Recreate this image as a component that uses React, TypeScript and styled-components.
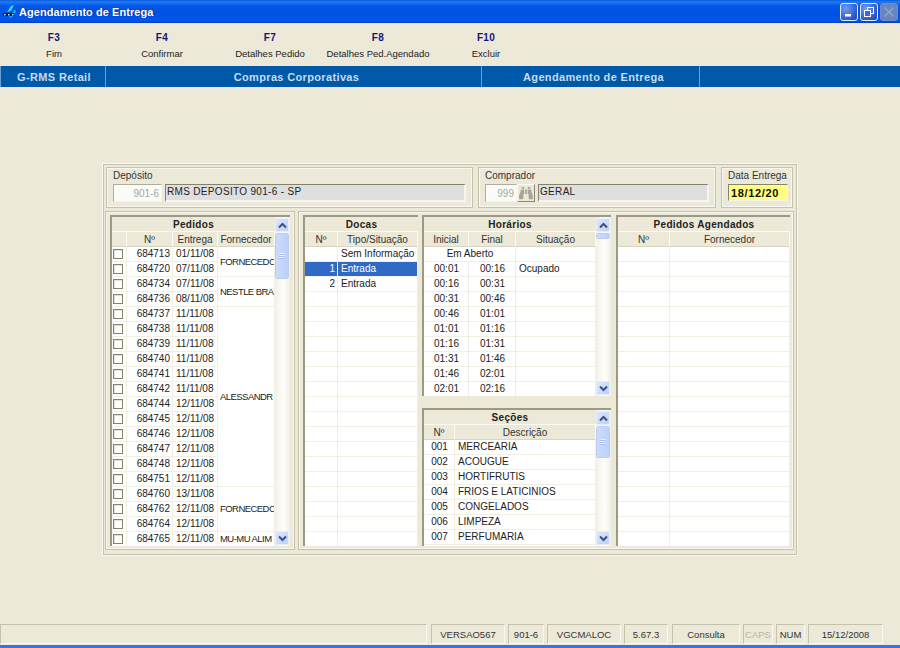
import React from "react";
import styled, { createGlobalStyle } from "styled-components";
import { FaBinoculars } from "react-icons/fa";

const Global = createGlobalStyle`
  html, body { margin: 0; padding: 0; background: #ece9d8; }
  body { font-family: "Liberation Sans", Arial, sans-serif; font-size: 10px; color: #222; }
  * { box-sizing: border-box; }
`;

const Page = styled.div`
  width: 900px; height: 648px; display: flex; flex-direction: column; overflow: hidden; background: #ece9d8;
`;
const TitleBar = styled.div`
  height: 24px; flex: none; display: flex; align-items: center; padding: 0 2px 1px 3px;
  background: linear-gradient(180deg, #0a5ad8 0%, #1f7cf4 8%, #0558ea 22%, #0050e4 55%, #0056ee 85%, #0040c0 96%, #e8e6da 96%);
`;
const TitleText = styled.div`
  color: #fff; font: bold 11px "Liberation Sans", sans-serif; letter-spacing: .05px; flex: 1; margin-left: 2px; text-shadow: 1px 0 1px #0a2a90;
`;
const WinButton = styled.div<{ $off?: boolean }>`
  width: 18px; height: 18px; margin-left: 2px; border-radius: 3px; display: flex; align-items: center; justify-content: center;
  border: 1px solid ${p => (p.$off ? "#6f8cc8" : "#e4ecfb")};
  background: ${p => (p.$off ? "#6a84c0" : "radial-gradient(circle at 30% 30%, #6e9cf2, #2450c8 80%)")};
`;
const Toolbar = styled.div`
  height: 42px; flex: none; display: flex; align-items: flex-start;
`;
const ToolItem = styled.div`
  width: 108px; display: flex; flex-direction: column; align-items: center; padding-top: 8px; gap: 4px; font-size: 9.5px; color: #222;
`;
const ToolKey = styled.b`
  color: #14147a; font-size: 10px; letter-spacing: .3px; line-height: 12px;
`;
const ToolLabel = styled.span` line-height: 11px; white-space: nowrap; `;
const Band = styled.div`
  height: 21px; flex: none; display: flex; background: #0058a8;
`;
const BandCell = styled.div<{ $w: number; $first?: boolean }>`
  width: ${p => p.$w}px; display: flex; align-items: center; justify-content: center; color: #c6dcee;
  font: bold 11px "Liberation Sans", sans-serif; letter-spacing: .35px; padding-left: ${p => (p.$first ? 2 : 6)}px;
  border-right: 1px solid #6c9ed0; border-left: ${p => (p.$first ? "1px solid #6c9ed0" : "0")};
`;
const Content = styled.div`
  flex: 1; padding: 76px 0 0 102px;
`;
const Outer = styled.div`
  width: 696px; height: 393px; padding: 3px; display: flex; flex-direction: column; gap: 3px;
  border: 1px solid #f8f7f0; outline: 1px solid #c4c1ac; outline-offset: -2px;
`;
const TopRow = styled.div` display: flex; gap: 5px; height: 41px; `;
const Group = styled.div<{ $w: number }>`
  width: ${p => p.$w}px; height: 41px; padding: 2px 6px 0 6px; border: 1px solid #c4c1ac; box-shadow: inset 0 0 0 1px #f8f7f0;
  display: flex; flex-direction: column; gap: 2px;
`;
const GroupLabel = styled.div` font-size: 10px; line-height: 12px; color: #333; white-space: nowrap; `;
const Fields = styled.div` display: flex; height: 18px; `;
const CodeInput = styled.div<{ $w: number }>`
  width: ${p => p.$w}px; height: 18px; background: #fbfbf8; color: #a8a8a0; text-align: right; padding: 0 2px; line-height: 17px;
  border: 1px solid; border-color: #b0ad9c #f4f3ea #f4f3ea #b0ad9c; flex: none;
`;
const DescField = styled.div<{ $w: number }>`
  width: ${p => p.$w}px; height: 18px; margin-left: 3px; background: #dfdfdf; padding: 0 1px; line-height: 14px; letter-spacing: .32px; color: #222;
  border: 1px solid; border-width: 1px 2px 2px 1px; border-color: #85826f #f6f5ee #f6f5ee #85826f;
`;
const LookBtn = styled.div`
  width: 18px; height: 18px; flex: none; background: #ece9d8; color: #a9a699; display: flex; align-items: center; justify-content: center;
  border: 1px solid; border-color: #fbfaf4 #8c8975 #8c8975 #fbfaf4;
`;
const DateInput = styled.div`
  width: 60px; height: 17px; background: #ffff80; padding-left: 2px; font: bold 11px/16px "Liberation Sans", sans-serif; letter-spacing: .65px; color: #111;
  border: 1px solid; border-color: #85826f #f4f3ea #f4f3ea #85826f;
`;
const BottomRow = styled.div` display: flex; gap: 3px; height: 339px; margin-left: -1px; `;
const GridGroup = styled.div<{ $w: number }>`
  width: ${p => p.$w}px; height: 339px; flex: none; display: flex; padding: 3px 3px 3px 4px; border: 1px solid #c4c1ac;
  box-shadow: inset 0 0 0 1px #f8f7f0;
`;
const Sunken = styled.div<{ $w: number; $h: number }>`
  width: ${p => p.$w}px; height: ${p => p.$h}px; flex: none; display: flex; overflow: hidden; background: #fff;
  border-top: 2px solid #9c9985; border-left: 2px solid #9c9985;
`;
const Stack = styled.div<{ $w: number }>` width: ${p => p.$w}px; margin-left: 4px; flex: none; display: flex; flex-direction: column; gap: 12px; `;
const TableHold = styled.div` flex: 1; min-width: 0; overflow: hidden; `;
const Table = styled.table`
  table-layout: fixed; width: 100%; border-collapse: separate; border-spacing: 0; font-size: 10px;
`;
const TitleCell = styled.th`
  height: 15px; padding: 0; background: #ece9d8; font: bold 10px "Liberation Sans", sans-serif; letter-spacing: .3px; color: #222; text-align: center;
  border-bottom: 1px solid #fbfaf4;
`;
const HeadCell = styled.th`
  height: 15px; padding: 0; background: #ece9d8; font: normal 10px "Liberation Sans", sans-serif; color: #333; text-align: center; overflow: hidden; white-space: nowrap;
  border-right: 1px solid #fbfaf4; border-bottom: 1px solid #d8d5c2;
`;
const Cell = styled.td<{ $align?: string; $sel?: boolean }>`
  height: 15px; padding: 0 2px 0 3px; line-height: 14px; text-align: ${p => p.$align || "left"}; overflow: visible; white-space: nowrap; color: ${p => (p.$sel ? "#fff" : "#222")};
  background: ${p => (p.$sel ? "#316ac5" : "#fff")}; border-right: 1px solid #f1efe2; border-bottom: 1px solid #f1efe2;
`;
const ClipCell = styled(Cell)` overflow: hidden; padding: 0 0 0 2px; font-size: 9.5px; letter-spacing: -.55px; `;
const Check = styled.span`
  display: block; width: 10px; height: 10px; margin: 0 0 0 -2px; border: 1px solid #85826f; background: #fff; box-shadow: inset 1px 1px 0 #e4e2d6;
`;
const Scroll = styled.div`
  width: 15px; flex: none; display: flex; flex-direction: column; padding: 1px 0; background: linear-gradient(90deg, #f3f1e8, #fefefb 60%, #f0efe4);
`;
const ScrollBtn = styled.div`
  height: 14px; flex: none; width: 14px; border-radius: 2px; border: 1px solid #e6eefc; background: linear-gradient(135deg, #dbe7fd, #bcd0f8);
  display: flex; align-items: center; justify-content: center;
`;
const Thumb = styled.div<{ $h: number }>`
  height: ${p => p.$h}px; width: 14px; margin-top: 1px; border-radius: 2px; flex: none; border: 1px solid #fdfdff; outline: 1px solid #bccdf2; outline-offset: -1px;
  background: linear-gradient(90deg, #cbdbfb, #bdd0f8); display: flex; align-items: center; justify-content: center;
`;
const Grip = styled.span`
  width: 6px; height: 6px; display: block; background: repeating-linear-gradient(180deg, #e8effd 0 1px, #a9c0ee 1px 2px);
`;
const Spacer = styled.div` flex: 1; `;
const StatusBar = styled.div`
  height: 21px; flex: none; display: flex; padding-bottom: 1px;
`;
const StatusCell = styled.div<{ $w: number; $gap: number; $off?: boolean }>`
  width: ${p => p.$w}px; margin-left: ${p => p.$gap}px; display: flex; align-items: center; justify-content: center; color: ${p => (p.$off ? "#b8b5a6" : "#333")}; font-size: 9.5px; white-space: nowrap;
  border: 1px solid; border-color: #c4c1ac #f8f7f0 #f8f7f0 #c4c1ac;
`;
const BottomEdge = styled.div`
  height: 3px; flex: none; background: #2f78e4;
`;

const Chevron = ({ down }: { down?: boolean }) => (
  <svg width="9" height="7" viewBox="0 0 9 7">
    <path d={down ? "M1 1.5 L4.5 5 L8 1.5" : "M1 5.5 L4.5 2 L8 5.5"} fill="none" stroke="#3d5178" strokeWidth="2" />
  </svg>
);

const ScrollBar = ({ thumb }: { thumb: number }) => (
  <Scroll>
    <ScrollBtn><Chevron /></ScrollBtn>
    <Thumb $h={thumb}>{thumb > 12 && <Grip />}</Thumb>
    <Spacer />
    <ScrollBtn><Chevron down /></ScrollBtn>
  </Scroll>
);

const Cols = ({ widths }: { widths: number[] }) => (
  <colgroup>{widths.map((w, i) => <col key={i} style={{ width: w }} />)}</colgroup>
);

const Logo = () => (
  <svg width="14" height="14" viewBox="0 0 14 14">
    <path d="M4 7 L8 1 L11 0 L8 6 Z" fill="#30d8e8" />
    <path d="M6 12 L12 4 L13 7 L8 13 Z" fill="#18a8d8" />
    <rect x="0" y="8" width="11" height="3" fill="#0a1a50" />
    <rect x="1" y="9" width="1.5" height="1.5" fill="#d8e8f0" />
    <rect x="5" y="9" width="1.5" height="1.5" fill="#d8e8f0" />
    <rect x="9" y="9" width="1.5" height="1.5" fill="#d8e8f0" />
  </svg>
);

const toolItems = [["F3", "Fim"], ["F4", "Confirmar"], ["F7", "Detalhes Pedido"], ["F8", "Detalhes Ped.Agendado"], ["F10", "Excluir"]];

const orders: [string, string, string?, number?][] = [
  ["684713", "01/11/08", "FORNECEDC", 2], ["684720", "07/11/08"],
  ["684734", "07/11/08", "NESTLE BRA", 2], ["684736", "08/11/08"],
  ["684737", "11/11/08", "ALESSANDR", 12], ["684738", "11/11/08"], ["684739", "11/11/08"], ["684740", "11/11/08"],
  ["684741", "11/11/08"], ["684742", "11/11/08"], ["684744", "12/11/08"], ["684745", "12/11/08"],
  ["684746", "12/11/08"], ["684747", "12/11/08"], ["684748", "12/11/08"], ["684751", "12/11/08"],
  ["684760", "13/11/08", "FORNECEDC", 3], ["684762", "12/11/08"], ["684764", "12/11/08"],
  ["684765", "12/11/08", "MU-MU ALIM", 1],
];
const slots = [["00:01","00:16","Ocupado"],["00:16","00:31"],["00:31","00:46"],["00:46","01:01"],["01:01","01:16"],["01:16","01:31"],["01:31","01:46"],["01:46","02:01"],["02:01","02:16"]];
const sections = [["001","MERCEARIA"],["002","ACOUGUE"],["003","HORTIFRUTIS"],["004","FRIOS E LATICINIOS"],["005","CONGELADOS"],["006","LIMPEZA"],["007","PERFUMARIA"]];
const docks = [["", "Sem Informação"], ["1", "Entrada"], ["2", "Entrada"]];
const status: [string, number, number, boolean?][] = [
  ["", 427, 0], ["VERSAO567", 74, 4], ["901-6", 36, 3], ["VGCMALOC", 74, 3], ["5.67.3", 44, 3],
  ["Consulta", 68, 4], ["CAPS", 30, 3, true], ["NUM", 29, 3], ["15/12/2008", 75, 3],
];
const range = (n: number) => Array.from({ length: n }, (_, i) => i);

export default function App() {
  return (
    <Page>
      <Global />
      <TitleBar>
        <Logo />
        <TitleText>Agendamento de Entrega</TitleText>
        <WinButton>
          <svg width="10" height="10" viewBox="0 0 10 10"><rect x="1" y="7" width="6" height="2.5" fill="#fff" /></svg>
        </WinButton>
        <WinButton>
          <svg width="12" height="12" viewBox="0 0 12 12" fill="none" stroke="#fff">
            <rect x="4.5" y="1.5" width="6" height="6" /><rect x="1.5" y="4.5" width="6" height="6" fill="#3a66d8" />
          </svg>
        </WinButton>
        <WinButton $off>
          <svg width="12" height="12" viewBox="0 0 12 12" stroke="#8ca2d2" strokeWidth="1.6"><path d="M1.5 1.5 L10.5 10.5 M10.5 1.5 L1.5 10.5" /></svg>
        </WinButton>
      </TitleBar>
      <Toolbar>
        {toolItems.map(([k, l]) => (
          <ToolItem key={k}><ToolKey>{k}</ToolKey><ToolLabel>{l}</ToolLabel></ToolItem>
        ))}
      </Toolbar>
      <Band>
        <BandCell $w={106} $first>G-RMS Retail</BandCell>
        <BandCell $w={376}>Compras Corporativas</BandCell>
        <BandCell $w={218}>Agendamento de Entrega</BandCell>
      </Band>
      <Content>
        <Outer>
          <TopRow>
            <Group $w={367}>
              <GroupLabel>Depósito</GroupLabel>
              <Fields><CodeInput $w={49}>901-6</CodeInput><DescField $w={303}>RMS DEPOSITO 901-6 - SP</DescField></Fields>
            </Group>
            <Group $w={238}>
              <GroupLabel>Comprador</GroupLabel>
              <Fields>
                <CodeInput $w={32}>999</CodeInput>
                <LookBtn><FaBinoculars size={14} /></LookBtn>
                <DescField $w={172}>GERAL</DescField>
              </Fields>
            </Group>
            <Group $w={72}>
              <GroupLabel>Data Entrega</GroupLabel>
              <DateInput>18/12/20</DateInput>
            </Group>
          </TopRow>
          <BottomRow>
            <GridGroup $w={190}>
              <Sunken $w={180} $h={331}>
                <TableHold>
                  <Table>
                    <Cols widths={[15, 46, 45, 57]} />
                    <thead>
                      <tr><TitleCell colSpan={4}>Pedidos</TitleCell></tr>
                      <tr><HeadCell /><HeadCell>Nº</HeadCell><HeadCell>Entrega</HeadCell><HeadCell>Fornecedor</HeadCell></tr>
                    </thead>
                    <tbody>
                      {orders.map(([n, d, f, span]) => (
                        <tr key={n}>
                          <Cell><Check /></Cell>
                          <Cell $align="right">{n}</Cell>
                          <Cell>{d}</Cell>
                          {f && <ClipCell rowSpan={span}>{f}</ClipCell>}
                        </tr>
                      ))}
                    </tbody>
                  </Table>
                </TableHold>
                <ScrollBar thumb={46} />
              </Sunken>
            </GridGroup>
            <GridGroup $w={496}>
              <Sunken $w={115} $h={331}>
                <TableHold>
                  <Table>
                    <Cols widths={[33, 80]} />
                    <thead>
                      <tr><TitleCell colSpan={2}>Docas</TitleCell></tr>
                      <tr><HeadCell>Nº</HeadCell><HeadCell>Tipo/Situação</HeadCell></tr>
                    </thead>
                    <tbody>
                      {docks.map(([n, t], i) => (
                        <tr key={i}>
                          <Cell $align="right" $sel={i === 1}>{n}</Cell>
                          <Cell $sel={i === 1}>{t}</Cell>
                        </tr>
                      ))}
                      {range(17).map(i => <tr key={i}><Cell /><Cell /></tr>)}
                    </tbody>
                  </Table>
                </TableHold>
              </Sunken>
              <Stack $w={190}>
                <Sunken $w={189} $h={181}>
                  <TableHold>
                    <Table>
                      <Cols widths={[45, 47, 80]} />
                      <thead>
                        <tr><TitleCell colSpan={3}>Horários</TitleCell></tr>
                        <tr><HeadCell>Inicial</HeadCell><HeadCell>Final</HeadCell><HeadCell>Situação</HeadCell></tr>
                      </thead>
                      <tbody>
                        <tr><Cell colSpan={2} $align="center">Em Aberto</Cell><Cell /></tr>
                        {slots.map(([a, b, c]) => (
                          <tr key={a}><Cell $align="center">{a}</Cell><Cell $align="center">{b}</Cell><Cell>{c}</Cell></tr>
                        ))}
                      </tbody>
                    </Table>
                  </TableHold>
                  <ScrollBar thumb={6} />
                </Sunken>
                <Sunken $w={189} $h={138}>
                  <TableHold>
                    <Table>
                      <Cols widths={[31, 141]} />
                      <thead>
                        <tr><TitleCell colSpan={2}>Seções</TitleCell></tr>
                        <tr><HeadCell>Nº</HeadCell><HeadCell>Descrição</HeadCell></tr>
                      </thead>
                      <tbody>
                        {sections.map(([n, d]) => (
                          <tr key={n}><Cell $align="center">{n}</Cell><Cell>{d}</Cell></tr>
                        ))}
                      </tbody>
                    </Table>
                  </TableHold>
                  <ScrollBar thumb={32} />
                </Sunken>
              </Stack>
              <Stack $w={174}>
                <Sunken $w={174} $h={331}>
                  <TableHold>
                    <Table>
                      <Cols widths={[52, 120]} />
                      <thead>
                        <tr><TitleCell colSpan={2}>Pedidos Agendados</TitleCell></tr>
                        <tr><HeadCell>Nº</HeadCell><HeadCell>Fornecedor</HeadCell></tr>
                      </thead>
                      <tbody>
                        {range(20).map(i => <tr key={i}><Cell /><Cell /></tr>)}
                      </tbody>
                    </Table>
                  </TableHold>
                </Sunken>
              </Stack>
            </GridGroup>
          </BottomRow>
        </Outer>
      </Content>
      <StatusBar>
        {status.map(([t, w, g, off], i) => <StatusCell key={i} $w={w} $gap={g} $off={off}>{t}</StatusCell>)}
      </StatusBar>
      <BottomEdge />
    </Page>
  );
}
